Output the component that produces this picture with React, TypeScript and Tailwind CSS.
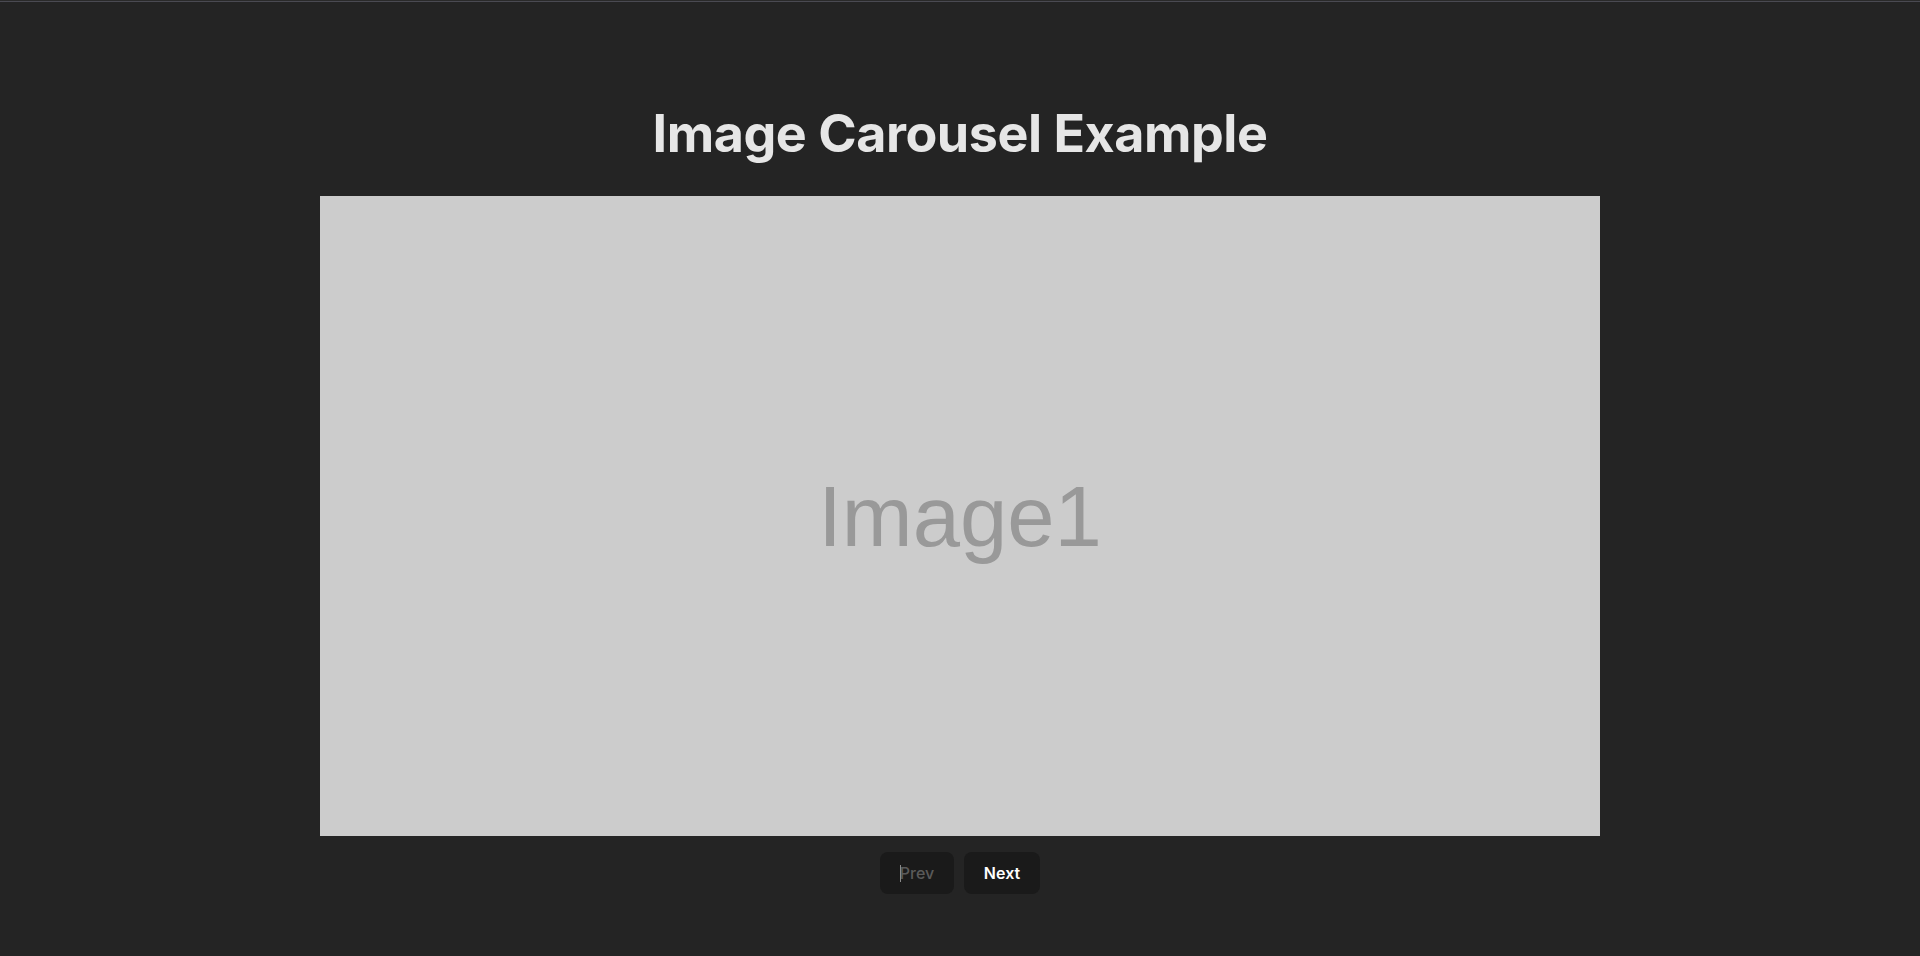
import React from "react";

export default function App() {
  return (
    <div
      className="min-h-[956px] w-full bg-[#242424] flex flex-col items-center"
      style={{ fontFamily: "Inter, 'Noto Sans', sans-serif" }}
    >
      <div className="w-full h-[1px] bg-[#2a2a2a]" />
      <div className="w-full h-[1px] bg-[#4a4a52]" />
      <h1 className="mt-[100px] text-[52px] leading-[64px] font-bold text-[#e6e6e6] tracking-[-0.45px]">
        Image Carousel Example
      </h1>
      <div className="mt-[30px] w-[1280px] h-[640px] bg-[#cccccc] flex items-center justify-center">
        <span
          className="text-[85px] leading-none text-[#999999] blur-[0.6px]"
          style={{ fontFamily: "'Liberation Sans', Arial, sans-serif" }}
        >
          Image1
        </span>
      </div>
      <div className="mt-[16px] flex gap-[10px]">
        <button
          disabled
          className="relative w-[74px] h-[42px] rounded-[8px] bg-[#1a1a1a] text-[#5a5a5a] text-[16px] font-medium flex items-center justify-center"
        >
          <span className="absolute left-[20px] top-[13px] w-[1px] h-[17px] bg-[#8a8a8a]" />
          Prev
        </button>
        <button className="w-[76px] h-[42px] rounded-[8px] bg-[#1a1a1a] text-white text-[16px] font-semibold flex items-center justify-center">
          Next
        </button>
      </div>
    </div>
  );
}
